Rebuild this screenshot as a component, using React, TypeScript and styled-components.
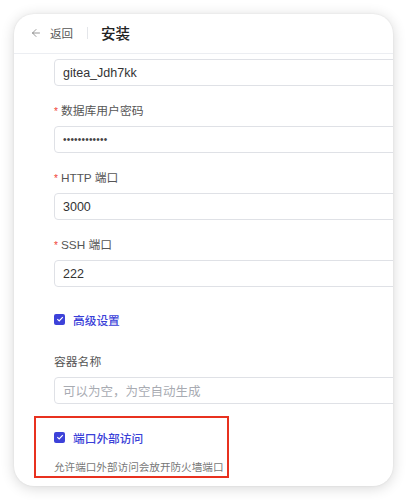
import React from "react";
import styled, { createGlobalStyle } from "styled-components";
import { ArrowLeft } from "lucide-react";

const GlobalStyle = createGlobalStyle`
  html, body {
    margin: 0;
    padding: 0;
    background: #ffffff;
  }
  body {
    font-family: "Liberation Sans", "Noto Sans CJK SC", sans-serif;
    color: #333;
  }
`;

const Page = styled.div`
  width: 407px;
  height: 500px;
  padding: 14px;
  box-sizing: border-box;
  background: #ffffff;
`;

const Card = styled.div`
  width: 379px;
  height: 472px;
  border-radius: 20px;
  background: #fff;
  box-shadow: 0 2px 14px rgba(0, 0, 0, 0.16), 0 0 2px rgba(0, 0, 0, 0.08);
  overflow: hidden;
  display: flex;
  flex-direction: column;
`;

const Header = styled.div`
  height: 40px;
  flex-shrink: 0;
  border-bottom: 1px solid #eceef2;
  display: flex;
  align-items: center;
  padding: 0 0 2px 16px;
  box-sizing: border-box;
`;

const Back = styled.div`
  display: flex;
  align-items: center;
  gap: 8px;
  color: #555;
  font-size: 11.5px;
  & svg {
    color: #777;
  }
`;

const Divider = styled.div`
  width: 1px;
  height: 12px;
  background: #e4e6ea;
  margin: 0 13px 0 14px;
`;

const Title = styled.div`
  font-size: 14.5px;
  font-weight: 500;
  color: #222;
`;

const Body = styled.div`
  padding: 5px 0 0 40px;
  display: flex;
  flex-direction: column;
`;

const Field = styled.div<{ $gap?: number }>`
  display: flex;
  flex-direction: column;
  margin-top: ${(p) => p.$gap ?? 0}px;
`;

const Label = styled.div`
  height: 20px;
  line-height: 20px;
  font-size: 11.8px;
  color: #555;
  margin-bottom: 5px;
`;

const Star = styled.span`
  color: #f04134;
  margin-right: 3px;
  font-size: 10px;
`;

const Input = styled.div<{ $placeholder?: boolean }>`
  width: 420px;
  height: 27px;
  box-sizing: border-box;
  border: 1px solid #dfe1e6;
  border-radius: 4px;
  padding-left: 8px;
  display: flex;
  align-items: center;
  font-size: 12.5px;
  color: ${(p) => (p.$placeholder ? "#a8abb2" : "#333")};
`;

const Dots = styled.span`
  letter-spacing: 0.2px;
  font-size: 10px;
  color: #444;
`;

const Check = styled.div<{ $gap?: number }>`
  display: flex;
  align-items: center;
  gap: 8px;
  height: 20px;
  margin-top: ${(p) => p.$gap ?? 0}px;
  color: #3a3fd8;
  font-size: 11.7px;
  font-weight: 500;
`;

const Box = styled.span`
  width: 11px;
  height: 11px;
  border-radius: 2px;
  background: #3d42d9;
  display: inline-flex;
  align-items: center;
  justify-content: center;
`;

const Highlight = styled.div`
  margin: 12px 0 0 -20px;
  width: 195px;
  box-sizing: border-box;
  border: 2px solid #e8311f;
  padding: 9px 0 1px 18px;
`;

const Help = styled.div`
  margin-top: 12px;
  height: 16px;
  line-height: 16px;
  font-size: 10.6px;
  color: #777;
  white-space: nowrap;
`;

const CheckBox = ({ text, gap }: { text: string; gap?: number }) => (
  <Check $gap={gap}>
    <Box>
      <svg width="8" height="8" viewBox="0 0 8 8">
        <path d="M1.3 4.1 L3.2 5.9 L6.8 2.2" stroke="#fff" strokeWidth="1.2" fill="none" />
      </svg>
    </Box>
    {text}
  </Check>
);

const fields = [
  { label: "数据库用户密码", value: "password", required: true },
  { label: "HTTP 端口", value: "3000", required: true },
  { label: "SSH 端口", value: "222", required: true },
];

export default function App() {
  return (
    <>
      <GlobalStyle />
      <Page>
        <Card>
          <Header>
            <Back>
              <ArrowLeft size={12} strokeWidth={1.5} />
              返回
            </Back>
            <Divider />
            <Title>安装</Title>
          </Header>
          <Body>
            <Input>gitea_Jdh7kk</Input>
            {fields.map((f) => (
              <Field key={f.label} $gap={15}>
                <Label>
                  {f.required && <Star>*</Star>}
                  {f.label}
                </Label>
                <Input>
                  {f.value === "password" ? <Dots>••••••••••••</Dots> : f.value}
                </Input>
              </Field>
            ))}
            <CheckBox text="高级设置" gap={22} />
            <Field $gap={23}>
              <Label>容器名称</Label>
              <Input $placeholder>可以为空，为空自动生成</Input>
            </Field>
            <Highlight>
              <CheckBox text="端口外部访问" />
              <Help>允许端口外部访问会放开防火墙端口</Help>
            </Highlight>
          </Body>
        </Card>
      </Page>
    </>
  );
}
